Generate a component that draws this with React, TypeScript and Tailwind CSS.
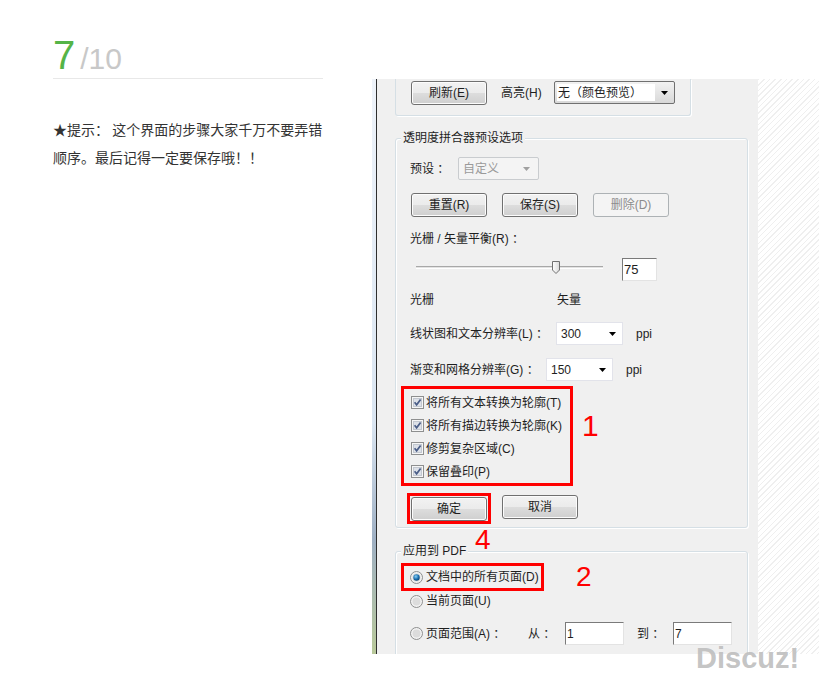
import React from "react";

const font = "font-['Liberation_Sans','Noto_Sans_CJK_SC',sans-serif]";

function Arrow({ color = "#000" }: { color?: string }) {
  return (
    <svg width="7" height="4" viewBox="0 0 7 4">
      <path d="M0 0h7L3.5 4z" fill={color} />
    </svg>
  );
}

function Btn({ children, disabled }: { children: React.ReactNode; disabled?: boolean }) {
  if (disabled) {
    return (
      <div className="w-[76px] h-[24px] flex items-center justify-center rounded-[3px] border border-[#adb2b5] bg-[#f4f4f4] text-[12px] text-[#8c8c8c]">
        {children}
      </div>
    );
  }
  return (
    <div className="w-[76px] h-[24px] flex items-center justify-center rounded-[3px] border border-[#707070] bg-[linear-gradient(#f2f2f2,#ebebeb_50%,#dddddd_50%,#cfcfcf)] shadow-[inset_0_0_0_1px_#fcfcfc] text-[12px] text-[#1e1e1e]">
      {children}
    </div>
  );
}

function Check() {
  return (
    <svg width="13" height="13" viewBox="0 0 13 13">
      <rect x="0.5" y="0.5" width="12" height="12" fill="#f6f6f6" stroke="#8e8f8f" />
      <rect x="2.5" y="2.5" width="8" height="8" fill="#dde1e8" stroke="#c3c8d0" />
      <path d="M3.6 6.3L5.6 8.8L9.6 3.4" stroke="#4a5d87" strokeWidth="1.7" fill="none" />
    </svg>
  );
}

function Radio({ on }: { on?: boolean }) {
  return (
    <svg width="13" height="13" viewBox="0 0 13 13">
      <defs>
        <radialGradient id="rg" cx="0.4" cy="0.35" r="0.7">
          <stop offset="0" stopColor="#8ad0f5" />
          <stop offset="0.6" stopColor="#1b6fb0" />
          <stop offset="1" stopColor="#0c3f6b" />
        </radialGradient>
      </defs>
      <circle cx="6.5" cy="6.5" r="6" fill="#f2f2f2" stroke="#8e8f8f" />
      <circle cx="6.5" cy="6.5" r="4" fill="#dcdcdc" />
      {on && <circle cx="6.5" cy="6.5" r="3.2" fill="url(#rg)" />}
    </svg>
  );
}

function Dropdown({ value, w }: { value: string; w: string }) {
  return (
    <div className={`${w} h-[23px] flex items-center justify-between bg-white border border-[#e2e3ea] pl-[4px] pr-[6px] text-[12px] text-[#1e1e1e]`}>
      <span>{value}</span>
      <Arrow />
    </div>
  );
}

function Group({ title, h, w, children }: { title: string; h: string; w: string; children: React.ReactNode }) {
  return (
    <div className={`relative ${w} ${h} border border-[#d5dfe5] rounded-[3px] shadow-[inset_1px_1px_0_#fff,1px_1px_0_#fff]`}>
      <span className="absolute -top-[9px] left-[5px] px-[2px] bg-[#f0f0f0] text-[12px] leading-[16px] text-[#1e1e1e]">
        {title}
      </span>
      {children}
    </div>
  );
}

export default function App() {
  return (
    <div className={`w-[819px] h-[683px] bg-white flex relative overflow-hidden ${font}`}>
      {/* left column */}
      <div className="ml-[53px] w-[270px] pt-[35px]">
        <div className="flex items-baseline h-[40px] box-content pb-[3px] border-b border-[#e8e8e8]">
          <span className="text-[40px] leading-none text-[#55b447]">7</span>
          <span className="ml-[5px] text-[30px] leading-none text-[#c8c8c8]">/10</span>
        </div>
        <p className="mt-[36px] text-[14px] leading-[28px] text-[#333333] font-['Noto_Sans_CJK_SC',sans-serif]">
          ★提示： 这个界面的步骤大家千万不要弄错
          <br />
          顺序。最后记得一定要保存哦！！
        </p>
      </div>

      {/* screenshot */}
      <div className="ml-[49px] mt-[79px] w-[447px] h-[575px] flex">
        <div className="w-[4px] bg-[linear-gradient(#eef3fa,#dbe6f2_60%,#9fb0c4_80%,#b9c99a)]" />
        <div className="w-px bg-[#2e2e2e]" />
        <div className="w-[381px] bg-[#f0f0f0] pl-[18px] overflow-hidden text-[#1e1e1e]">
          {/* group 1 (cut off) */}
          <div className="w-[296px] h-[37px] border border-t-0 border-[#d5dfe5] rounded-b-[3px] shadow-[1px_1px_0_#fff] flex items-start pt-[2px] pl-[15px]">
            <Btn>刷新(E)</Btn>
            <span className="ml-[14px] w-[53px] h-[24px] flex items-center text-[12px]">高亮(H)</span>
            <div className="w-[121px] h-[23px] flex rounded-[2px] border border-[#707070] bg-[linear-gradient(#f2f2f2,#d8d8d8)]">
              <div className="flex-1 m-[2px] mr-0 bg-white flex items-center pl-[1px] text-[12px]">无（颜色预览）</div>
              <div className="w-[19px] flex items-center justify-center">
                <Arrow />
              </div>
            </div>
          </div>

          {/* group 2 */}
          <div className="mt-[22px]">
            <Group title="透明度拼合器预设选项" w="w-[353px]" h="h-[390px]">
              <div className="flex flex-col">
                <div className="mt-[18px] h-[23px] flex items-center pl-[14px] text-[12px]">
                  <span className="w-[48px]">预设 ：</span>
                  <div className="w-[81px] h-[23px] flex items-center justify-between border border-[#c9cccf] rounded-[2px] bg-[#f4f4f4] pl-[4px] pr-[8px] text-[#9a9a9a]">
                    <span>自定义</span>
                    <Arrow color="#a0a0a0" />
                  </div>
                </div>
                <div className="mt-[13px] h-[24px] flex items-center pl-[15px] gap-[15px]">
                  <Btn>重置(R)</Btn>
                  <Btn>保存(S)</Btn>
                  <Btn disabled>删除(D)</Btn>
                </div>
                <div className="mt-[14px] h-[16px] flex items-center pl-[14px] text-[12px]">光栅 / 矢量平衡(R) ：</div>
                <div className="mt-[11px] h-[23px] flex items-start pl-[20px]">
                  <div className="relative w-[187px] h-[23px]">
                    <div className="mt-[8px] h-[3px] border-t border-[#a8a8a8] bg-[#e3e3e3] border-b border-b-white" />
                    <svg className="absolute left-[136px] top-[3px]" width="8" height="13" viewBox="0 0 8 13">
                      <defs>
                        <linearGradient id="th" x1="0" y1="0" x2="1" y2="0">
                          <stop offset="0" stopColor="#ffffff" />
                          <stop offset="1" stopColor="#d8d8d8" />
                        </linearGradient>
                      </defs>
                      <path d="M0.5 0.5h7v8.5l-3.5 3.5l-3.5-3.5z" fill="url(#th)" stroke="#707070" />
                    </svg>
                  </div>
                  <div className="ml-[19px] w-[35px] h-[23px] bg-white border border-t-[#7a7a7a] border-l-[#7a7a7a] border-r-[#e3e3e3] border-b-[#e3e3e3] flex items-center pl-[1px] text-[13px]">
                    75
                  </div>
                </div>
                <div className="mt-[11px] h-[16px] flex items-center pl-[14px] text-[12px]">
                  <span className="w-[147px]">光栅</span>
                  <span>矢量</span>
                </div>
                <div className="mt-[14px] h-[23px] flex items-center pl-[14px] text-[12px]">
                  <span className="w-[146px]">线状图和文本分辨率(L) ：</span>
                  <Dropdown value="300" w="w-[67px]" />
                  <span className="ml-[13px]">ppi</span>
                </div>
                <div className="mt-[13px] h-[23px] flex items-center pl-[14px] text-[12px]">
                  <span className="w-[136px]">渐变和网格分辨率(G) ：</span>
                  <Dropdown value="150" w="w-[67px]" />
                  <span className="ml-[13px]">ppi</span>
                </div>
                <div className="mt-[5px] flex items-start">
                  <div className="ml-[5px] w-[172px] h-[100px] border-[3px] border-[#ff0000] pt-[2px] pl-[7px] flex flex-col">
                    {["将所有文本转换为轮廓(T)", "将所有描边转换为轮廓(K)", "修剪复杂区域(C)", "保留叠印(P)"].map((t) => (
                      <div key={t} className="h-[23px] flex items-center gap-[2px] text-[12px]">
                        <Check />
                        <span>{t}</span>
                      </div>
                    ))}
                  </div>
                  <span className="ml-[9px] mt-[25px] text-[30px] leading-none text-[#ff0000]">1</span>
                </div>
                <div className="mt-[7px] flex items-start pl-[11px]">
                  <div className="relative border-[3px] border-[#ff0000] px-px pt-px">
                    <Btn>确定</Btn>
                    <span className="absolute left-[65px] top-[30px] text-[28px] leading-none text-[#ff0000]">4</span>
                  </div>
                  <div className="ml-[11px] mt-[2px]">
                    <Btn>取消</Btn>
                  </div>
                </div>
              </div>
            </Group>
          </div>

          {/* group 3 */}
          <div className="mt-[23px]">
            <Group title="应用到 PDF" w="w-[353px]" h="h-[140px]">
              <div className="flex flex-col text-[12px]">
                <div className="mt-[11px] flex items-center">
                  <div className="ml-[5px] w-[143px] h-[28px] border-[3px] border-[#ff0000] pl-[6px] flex items-center gap-[3px]">
                    <Radio on />
                    <span>文档中的所有页面(D)</span>
                  </div>
                  <span className="ml-[32px] text-[28px] leading-none text-[#ff0000]">2</span>
                </div>
                <div className="mt-px h-[18px] flex items-center pl-[14px] gap-[3px]">
                  <Radio />
                  <span>当前页面(U)</span>
                </div>
                <div className="mt-[12px] h-[23px] flex items-center pl-[14px]">
                  <Radio />
                  <span className="ml-[3px] w-[102px]">页面范围(A) ：</span>
                  <span className="w-[37px]">从 ：</span>
                  <div className="w-[59px] h-[23px] bg-white border border-t-[#7a7a7a] border-l-[#7a7a7a] border-r-[#e3e3e3] border-b-[#e3e3e3] pl-[1px] flex items-center">1</div>
                  <span className="ml-[13px] w-[36px]">到 ：</span>
                  <div className="w-[59px] h-[23px] bg-white border border-t-[#7a7a7a] border-l-[#7a7a7a] border-r-[#e3e3e3] border-b-[#e3e3e3] pl-[1px] flex items-center">7</div>
                </div>
              </div>
            </Group>
          </div>
        </div>
        <div className="w-[61px] bg-[repeating-linear-gradient(135deg,#efefef_0px,#efefef_1px,#ffffff_1px,#ffffff_4px)]" />
      </div>

      {/* watermark */}
      <span className="absolute left-[696px] top-[644px] text-[29px] leading-none font-bold text-[#bdbdbd]/90">Discuz!</span>
    </div>
  );
}
